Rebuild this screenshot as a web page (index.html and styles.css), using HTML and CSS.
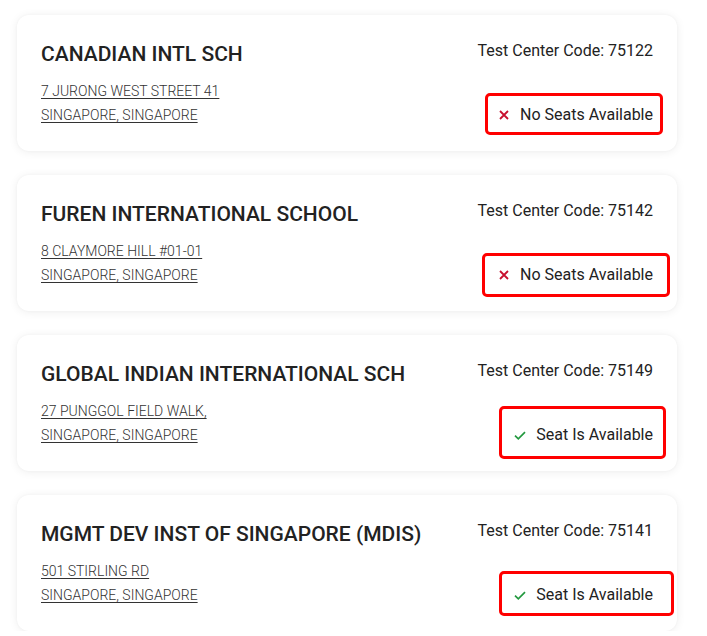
FILE: index.html
```html
<!DOCTYPE html>
<html lang="en">
<head>
<meta charset="utf-8">
<title>Test Centers</title>
<link rel="stylesheet" href="styles.css">
</head>
<body>
<main class="list">
  <section class="card">
    <div class="info">
      <h2 class="name">CANADIAN INTL SCH</h2>
      <div class="addr">
        <a href="#" class="addr-line">7 JURONG WEST STREET 41</a>
        <a href="#" class="addr-line">SINGAPORE, SINGAPORE</a>
      </div>
    </div>
    <div class="side">
      <div class="code">Test Center Code: 75122</div>
      <div class="status status-no hl-1">
        <svg class="ico-x" viewBox="0 0 10 10" width="10" height="10"><path d="M1 1 L9 9 M9 1 L1 9" /></svg>
        <span>No Seats Available</span>
      </div>
    </div>
  </section>

  <section class="card">
    <div class="info">
      <h2 class="name">FUREN INTERNATIONAL SCHOOL</h2>
      <div class="addr">
        <a href="#" class="addr-line">8 CLAYMORE HILL #01-01</a>
        <a href="#" class="addr-line">SINGAPORE, SINGAPORE</a>
      </div>
    </div>
    <div class="side">
      <div class="code">Test Center Code: 75142</div>
      <div class="status status-no hl-2">
        <svg class="ico-x" viewBox="0 0 10 10" width="10" height="10"><path d="M1 1 L9 9 M9 1 L1 9" /></svg>
        <span>No Seats Available</span>
      </div>
    </div>
  </section>

  <section class="card">
    <div class="info">
      <h2 class="name">GLOBAL INDIAN INTERNATIONAL SCH</h2>
      <div class="addr">
        <a href="#" class="addr-line">27 PUNGGOL FIELD WALK,</a>
        <a href="#" class="addr-line">SINGAPORE, SINGAPORE</a>
      </div>
    </div>
    <div class="side">
      <div class="code">Test Center Code: 75149</div>
      <div class="status status-yes hl-3">
        <svg class="ico-check" viewBox="0 0 12 9" width="12" height="9"><path d="M1 4.6 L4.3 7.8 L11 1.2" /></svg>
        <span>Seat Is Available</span>
      </div>
    </div>
  </section>

  <section class="card">
    <div class="info">
      <h2 class="name">MGMT DEV INST OF SINGAPORE (MDIS)</h2>
      <div class="addr">
        <a href="#" class="addr-line">501 STIRLING RD</a>
        <a href="#" class="addr-line">SINGAPORE, SINGAPORE</a>
      </div>
    </div>
    <div class="side">
      <div class="code">Test Center Code: 75141</div>
      <div class="status status-yes hl-4">
        <svg class="ico-check" viewBox="0 0 12 9" width="12" height="9"><path d="M1 4.6 L4.3 7.8 L11 1.2" /></svg>
        <span>Seat Is Available</span>
      </div>
    </div>
  </section>
</main>
</body>
</html>
```

FILE: styles.css
```css
html, body {
  margin: 0;
  padding: 0;
  background: #ffffff;
}

body {
  font-family: Roboto, "Liberation Sans", sans-serif;
  color: #222222;
}

.list {
  display: flex;
  flex-direction: column;
  gap: 24px;
  padding: 15px 0 0 17px;
  width: 660px;
}

.card {
  display: flex;
  justify-content: space-between;
  height: 136px;
  box-sizing: border-box;
  padding: 24px 24px 24px 24px;
  background: #ffffff;
  border-radius: 12px;
  box-shadow: 0 1px 10px rgba(0, 0, 0, 0.07), 0 0 3px rgba(0, 0, 0, 0.03);
}

.info {
  display: flex;
  flex-direction: column;
}

.name {
  margin: 0;
  font-size: 21px;
  line-height: 31px;
  font-weight: 500;
  color: #222222;
}

.addr {
  display: flex;
  flex-direction: column;
  margin-top: 9px;
}

.addr-line {
  font-size: 14px;
  line-height: 24px;
  font-weight: 300;
  color: #333333;
  text-decoration: underline;
  text-underline-offset: 2px;
}

.side {
  display: flex;
  flex-direction: column;
  justify-content: space-between;
  align-items: flex-end;
}

.code {
  font-size: 16px;
  line-height: 24px;
  color: #222222;
}

.status {
  position: relative;
  display: flex;
  align-items: center;
  font-size: 16px;
  line-height: 24px;
  color: #222222;
}

.ico-x {
  margin-right: 11px;
  fill: none;
  stroke: #c8102e;
  stroke-width: 1.8;
}

.ico-check {
  margin-right: 10px;
  fill: none;
  stroke: #23993f;
  stroke-width: 1.7;
}

.status::after {
  content: "";
  position: absolute;
  border: 3px solid #ff0000;
  border-radius: 5px;
}

.hl-1::after { left: -14px; right: -10px; top: -10px; bottom: -8px; }
.hl-2::after { left: -17px; right: -17px; top: -10px; bottom: -10px; }
.hl-3::after { left: -15px; right: -13px; top: -17px; bottom: -12px; }
.hl-4::after { left: -15px; right: -21px; top: -12px; bottom: -9px; }
```
